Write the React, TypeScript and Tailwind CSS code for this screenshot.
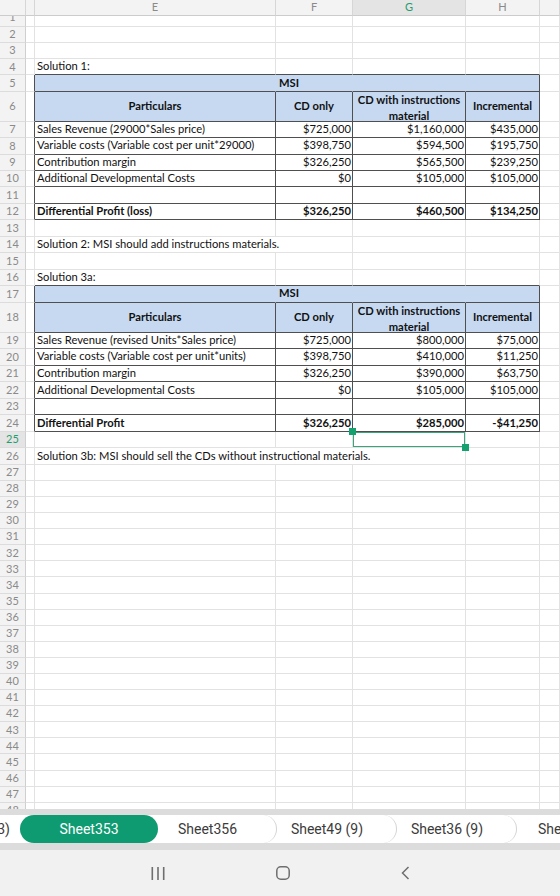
import React from "react";

const W = {
  d: "w-[9px]",
  e: "w-[241px]",
  f: "w-[77px]",
  g: "w-[113px]",
  h: "w-[74px]",
  ef: "w-[318px]",
  efg: "w-[431px]",
  i: "flex-1",
};

const GR = "border-r-[#e2e2e2]";
const GB = "border-b-[#e2e2e2]";
const DR = "border-r-[#4f4f4f]";
const DB = "border-b-[#4f4f4f]";
const BR = "border-r-[#c6d9f1]";

function Cell({
  w,
  r = GR,
  b = GB,
  cls = "",
  children,
}: {
  w: string;
  r?: string;
  b?: string;
  cls?: string;
  children?: React.ReactNode;
}) {
  return (
    <div
      className={`${w} shrink-0 h-full border-r border-b ${r} ${b} flex items-center whitespace-nowrap ${cls}`}
    >
      {children}
    </div>
  );
}

function Label({ n, cls = "" }: { n: string; cls?: string }) {
  return (
    <div
      className={`w-[26px] shrink-0 h-full border-r border-b border-r-[#cfcfcf] border-b-[#dcdcdc] bg-[#f3f3f3] flex items-center justify-center text-[11px] text-[#8a8a8a] ${cls}`}
    >
      {n}
    </div>
  );
}

function Row({ h, children }: { h: string; children: React.ReactNode }) {
  return <div className={`flex ${h} shrink-0`}>{children}</div>;
}

function EmptyRow({ n, h }: { n: string; h: string }) {
  return (
    <Row h={h}>
      <Label n={n} />
      <Cell w={W.d} />
      <Cell w={W.e} />
      <Cell w={W.f} />
      <Cell w={W.g} />
      <Cell w={W.h} />
      <Cell w={W.i} />
    </Row>
  );
}

function TitleRow({ n, h, text, dark }: { n: string; h: string; text: string; dark?: boolean }) {
  const b = dark ? DB : GB;
  return (
    <Row h={h}>
      <Label n={n} />
      <Cell w={W.d} />
      <Cell w={W.e} b={b} cls="pl-[2px]">
        {text}
      </Cell>
      <Cell w={W.f} b={b} />
      <Cell w={W.g} b={b} />
      <Cell w={W.h} b={b} />
      <Cell w={W.i} />
    </Row>
  );
}

function MsiRow({ n, h }: { n: string; h: string }) {
  return (
    <Row h={h}>
      <Label n={n} />
      <Cell w={W.d} r={DR} />
      <Cell w={W.e} r={BR} b={DB} cls="bg-[#c6d9f1]" />
      <Cell w={W.f} r={BR} b={DB} cls="bg-[#c6d9f1] pl-[3px] font-bold">
        MSI
      </Cell>
      <Cell w={W.g} r={BR} b={DB} cls="bg-[#c6d9f1]" />
      <Cell w={W.h} r={DR} b={DB} cls="bg-[#c6d9f1]" />
      <Cell w={W.i} />
    </Row>
  );
}

function HeadRow({ n, h }: { n: string; h: string }) {
  return (
    <Row h={h}>
      <Label n={n} />
      <Cell w={W.d} r={DR} />
      <Cell w={W.e} r={DR} b={DB} cls="bg-[#c6d9f1] justify-center font-bold">
        Particulars
      </Cell>
      <Cell w={W.f} r={DR} b={DB} cls="bg-[#c6d9f1] justify-center font-bold">
        CD only
      </Cell>
      <Cell
        w={W.g}
        r={DR}
        b={DB}
        cls="bg-[#c6d9f1] flex-col !items-center !justify-start font-bold leading-[16.7px] relative z-10"
      >
        <span>CD with instructions</span>
        <span>material</span>
      </Cell>
      <Cell w={W.h} r={DR} b={DB} cls="bg-[#c6d9f1] justify-center font-bold">
        Incremental
      </Cell>
      <Cell w={W.i} />
    </Row>
  );
}

function DataRow({
  n,
  h,
  label,
  f,
  g,
  hv,
  bold,
}: {
  n: string;
  h: string;
  label: string;
  f: string;
  g: string;
  hv: string;
  bold?: boolean;
}) {
  const bw = bold ? "font-bold" : "";
  return (
    <Row h={h}>
      <Label n={n} />
      <Cell w={W.d} r={DR} />
      <Cell w={W.e} r={DR} b={DB} cls={`pl-[2px] ${bw}`}>
        {label}
      </Cell>
      <Cell w={W.f} r={DR} b={DB} cls={`justify-end pr-[1px] ${bw}`}>
        {f}
      </Cell>
      <Cell w={W.g} r={DR} b={DB} cls={`justify-end pr-[1px] ${bw}`}>
        {g}
      </Cell>
      <Cell w={W.h} r={DR} b={DB} cls={`justify-end pr-[1px] ${bw}`}>
        {hv}
      </Cell>
      <Cell w={W.i} />
    </Row>
  );
}

function HeaderRow() {
  const base =
    "shrink-0 h-full border-r border-b border-r-[#d6d6d6] border-b-[#cccccc] bg-[#f3f3f3] flex items-center justify-center text-[11px] text-[#8a8a8a]";
  return (
    <div className="flex h-[16px] shrink-0">
      <div className={`w-[26px] ${base}`} />
      <div className={`${W.d} ${base}`} />
      <div className={`${W.e} ${base}`}>E</div>
      <div className={`${W.f} ${base}`}>F</div>
      <div className={`${W.g} ${base} !bg-[#e4e4e4] !text-[#1f9d6e]`}>G</div>
      <div className={`${W.h} ${base}`}>H</div>
      <div className={`flex-1 ${base}`} />
    </div>
  );
}

export default function App() {
  const tail: string[] = [];
  for (let i = 27; i <= 48; i++) tail.push(String(i));
  return (
    <div className="w-[560px] h-[896px] overflow-hidden bg-white font-['Lato',sans-serif] text-[11.2px] text-[#111] flex flex-col">
      <div className="h-[809px] overflow-hidden shrink-0 flex flex-col">
        <HeaderRow />
        {/* row 1, partially hidden */}
        <div className="flex h-[10.7px] shrink-0 overflow-hidden">
          <div className="w-[26px] shrink-0 h-full border-r border-b border-r-[#cfcfcf] border-b-[#dcdcdc] bg-[#f3f3f3] flex items-end justify-center text-[11px] text-[#8a8a8a] overflow-hidden">
            <span className="leading-[16.4px] block">1</span>
          </div>
          <Cell w={W.d} />
          <Cell w={W.e} />
          <Cell w={W.f} />
          <Cell w={W.g} />
          <Cell w={W.h} />
          <Cell w={W.i} />
        </div>
        <EmptyRow n="2" h="h-[16.25px]" />
        <EmptyRow n="3" h="h-[16.25px]" />
        <TitleRow n="4" h="h-[16.25px]" text="Solution 1:" dark />
        <MsiRow n="5" h="h-[16.25px]" />
        <HeadRow n="6" h="h-[30px]" />
        <DataRow
          n="7"
          h="h-[16.45px]"
          label="Sales Revenue (29000*Sales price)"
          f="$725,000"
          g="$1,160,000"
          hv="$435,000"
        />
        <DataRow
          n="8"
          h="h-[16.45px]"
          label="Variable costs (Variable cost per unit*29000)"
          f="$398,750"
          g="$594,500"
          hv="$195,750"
        />
        <DataRow
          n="9"
          h="h-[16.45px]"
          label="Contribution margin"
          f="$326,250"
          g="$565,500"
          hv="$239,250"
        />
        <DataRow
          n="10"
          h="h-[16.45px]"
          label="Additional Developmental Costs"
          f="$0"
          g="$105,000"
          hv="$105,000"
        />
        <DataRow n="11" h="h-[16.45px]" label="" f="" g="" hv="" />
        <DataRow
          n="12"
          h="h-[16.45px]"
          label="Differential Profit (loss)"
          f="$326,250"
          g="$460,500"
          hv="$134,250"
          bold
        />
        <EmptyRow n="13" h="h-[16.45px]" />
        <Row h="h-[16.45px]">
          <Label n="14" />
          <Cell w={W.d} />
          <Cell w={W.ef} cls="pl-[2px]">
            Solution 2: MSI should add instructions materials.
          </Cell>
          <Cell w={W.g} />
          <Cell w={W.h} />
          <Cell w={W.i} />
        </Row>
        <EmptyRow n="15" h="h-[16.45px]" />
        <TitleRow n="16" h="h-[16.45px]" text="Solution 3a:" dark />
        <MsiRow n="17" h="h-[16.45px]" />
        <HeadRow n="18" h="h-[30px]" />
        <DataRow
          n="19"
          h="h-[16.55px]"
          label="Sales Revenue (revised Units*Sales price)"
          f="$725,000"
          g="$800,000"
          hv="$75,000"
        />
        <DataRow
          n="20"
          h="h-[16.55px]"
          label="Variable costs (Variable cost per unit*units)"
          f="$398,750"
          g="$410,000"
          hv="$11,250"
        />
        <DataRow
          n="21"
          h="h-[16.55px]"
          label="Contribution margin"
          f="$326,250"
          g="$390,000"
          hv="$63,750"
        />
        <DataRow
          n="22"
          h="h-[16.55px]"
          label="Additional Developmental Costs"
          f="$0"
          g="$105,000"
          hv="$105,000"
        />
        <DataRow n="23" h="h-[16.55px]" label="" f="" g="" hv="" />
        <DataRow
          n="24"
          h="h-[16.55px]"
          label="Differential Profit"
          f="$326,250"
          g="$285,000"
          hv="-$41,250"
          bold
        />
        {/* row 25 with selection */}
        <Row h="h-[16.5px]">
          <Label n="25" cls="!bg-[#e4e4e4] !text-[#1f9d6e]" />
          <Cell w={W.d} />
          <Cell w={W.e} />
          <Cell w={W.f} />
          <Cell w={W.g} cls="relative">
            <div className="absolute left-0 top-0 right-0 bottom-0 border-[1.5px] border-[#3aa47d]" />
            <div className="absolute left-[-4px] top-[-4px] w-[7px] h-[7px] bg-[#15a06f]" />
            <div className="absolute right-[-4px] bottom-[-4px] w-[7px] h-[7px] bg-[#15a06f]" />
          </Cell>
          <Cell w={W.h} />
          <Cell w={W.i} />
        </Row>
        <Row h="h-[16.5px]">
          <Label n="26" />
          <Cell w={W.d} />
          <Cell w={W.efg} cls="pl-[2px]">
            Solution 3b: MSI should sell the CDs without instructional materials.
          </Cell>
          <Cell w={W.h} />
          <Cell w={W.i} />
        </Row>
        {tail.map((n) => (
          <EmptyRow key={n} n={n} h="h-[16.1px]" />
        ))}
      </div>

      {/* sheet tabs */}
      <div className="h-[6px] bg-[#dcdcdc] shrink-0" />
      <div className="h-[28px] bg-white flex items-stretch shrink-0 font-['Roboto',sans-serif] text-[14px] text-[#3b3b3b] overflow-hidden">
        <div className="w-[20px] shrink-0 overflow-hidden flex justify-end items-center pr-[10px]">
          <span className="whitespace-nowrap">(3)</span>
        </div>
        <div className="w-[138px] shrink-0 rounded-full bg-[#0f9b71] text-white flex items-center justify-center">
          Sheet353
        </div>
        <div className="w-[119px] shrink-0 flex items-center justify-center pr-[19px] rounded-r-[16px] border-r border-[#d3d3d3]">
          Sheet356
        </div>
        <div className="w-[120px] shrink-0 flex items-center justify-center pr-[19px] rounded-r-[16px] border-r border-[#d3d3d3] whitespace-nowrap">
          Sheet49 (9)
        </div>
        <div className="w-[120px] shrink-0 flex items-center justify-center pr-[19px] rounded-r-[16px] border-r border-[#d3d3d3] whitespace-nowrap">
          Sheet36 (9)
        </div>
        <div className="w-[120px] shrink-0 flex items-center justify-center pr-[19px] whitespace-nowrap">
          Sheet354
        </div>
      </div>
      <div className="h-[7px] bg-[#dcdcdc] shrink-0" />

      {/* navigation bar */}
      <div className="flex-1 bg-[#f1f1f1] flex items-center pl-[151px]">
        <svg width="14" height="13" viewBox="0 0 14 13" className="shrink-0">
          <rect x="0.5" y="0" width="1.6" height="13" fill="#6e6e6e" />
          <rect x="6.2" y="0" width="1.6" height="13" fill="#6e6e6e" />
          <rect x="11.9" y="0" width="1.6" height="13" fill="#6e6e6e" />
        </svg>
        <svg width="14" height="14" viewBox="0 0 14 14" className="shrink-0 ml-[111px]">
          <rect x="0.8" y="0.8" width="12.4" height="12.4" rx="4" fill="none" stroke="#6e6e6e" strokeWidth="1.5" />
        </svg>
        <svg width="9" height="14" viewBox="0 0 9 14" className="shrink-0 ml-[111px]">
          <path d="M7.5 1 L1.5 7 L7.5 13" fill="none" stroke="#6e6e6e" strokeWidth="1.5" />
        </svg>
      </div>
    </div>
  );
}
